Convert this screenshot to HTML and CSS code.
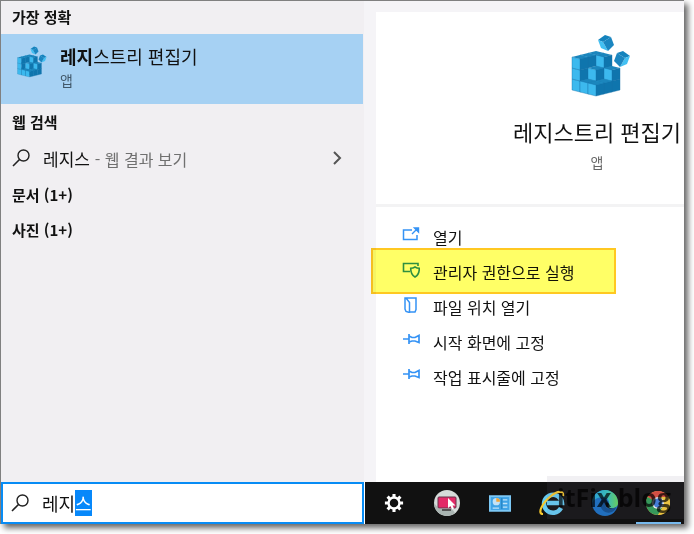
FILE: index.html
```html
<!DOCTYPE html>
<html lang="ko">
<head>
    <meta charset="UTF-8">
    <meta name="viewport" content="width=device-width, initial-scale=1.0">
    <title>레지스트리 편집기 - 검색</title>
    <link rel="stylesheet" href="styles.css">
</head>
<body>
    <!-- shared icons -->
    <svg class="defs" width="0" height="0" aria-hidden="true">
        <defs>
            <g id="cube">
                <path d="M8 0L16 2L8 4L0 2Z" fill="#1b86bd"/>
                <path d="M0 2L8 4V15L0 13Z" fill="#3cb9ee"/>
                <path d="M8 4L16 2V13L8 15Z" fill="#0f75ad"/>
                <path d="M0 2L8 4L16 2M8 4V15M0 2V13L8 15L16 13V2" fill="none" stroke="#1672a8" stroke-width=".4"/>
            </g>
            <g id="flying">
                <path d="M-8 -3L-1 -8L5 -6L-3 -1Z" fill="#1483bd"/>
                <path d="M-8 -3L-3 -1L2 8L-5 5Z" fill="#43c0f2"/>
                <path d="M-3 -1L5 -6L8 2L2 8Z" fill="#1b86c0"/>
            </g>
            <symbol id="regedit" viewBox="-8 0 68 62">
                <use href="#cube" x="17" y="16"/>
                <use href="#cube" x="9" y="18"/>
                <use href="#cube" x="25" y="29"/>
                <use href="#cube" x="25" y="18"/>
                <use href="#cube" x="1" y="42"/>
                <use href="#cube" x="1" y="31"/>
                <use href="#cube" x="1" y="20"/>
                <use href="#cube" x="17" y="42"/>
                <use href="#cube" x="17" y="31"/>
                <use href="#cube" x="33" y="42"/>
                <use href="#cube" x="33" y="31"/>
                <use href="#cube" x="9" y="44"/>
                <use href="#cube" x="25" y="44"/>
                <use href="#cube" x="17" y="46"/>
                <use href="#flying" x="35" y="8"/>
                <use href="#flying" transform="translate(51 24) scale(-1 1)"/>
            </symbol>
            <symbol id="search" viewBox="0 0 18 18">
                <circle cx="11.500" cy="6.500" r="5.500" fill="none" stroke="#222" stroke-width="1.400"/>
                <path d="M7.500 10.500L1 17" stroke="#222" stroke-width="1.600"/>
            </symbol>
            <symbol id="pin" viewBox="0 0 18 16">
                <path d="M1 7H7M7 2V12M7 4L10 5.500H13L17 3.500V10.500L13 9H10L7 10" fill="none" stroke="#3593f5" stroke-width="1.700"/>
            </symbol>
        </defs>
    </svg>

    <div class="screen">
        <main class="panels">
            <section class="results">
                <h2>가장 정확</h2>
                <a href="#" class="best">
                    <svg class="best-icon"><use href="#regedit"/></svg>
                    <span class="best-text">
                        <span class="best-name"><b>레지</b>스트리 편집기</span>
                        <span class="kind">앱</span>
                    </span>
                </a>
                <h2 class="web-title">웹 검색</h2>
                <a href="#" class="web-row">
                    <svg class="search-icon"><use href="#search"/></svg>
                    <span class="web-query">레지스 <small>- 웹 결과 보기</small></span>
                    <svg class="chevron" viewBox="0 0 10 14"><path d="M2 1L8 7L2 13" fill="none" stroke="#555" stroke-width="2"/></svg>
                </a>
                <h2 class="group">문서 (1+)</h2>
                <h2 class="group">사진 (1+)</h2>
            </section>

            <section class="details">
                <div class="card">
                    <div class="hero">
                        <svg class="hero-icon"><use href="#regedit"/></svg>
                        <h1>레지스트리 편집기</h1>
                        <span class="kind">앱</span>
                    </div>
                    <ul class="actions">
                        <li><button type="button">
                            <svg viewBox="0 0 18 16"><path d="M10 3H1.500V12.500H15V8" fill="none" stroke="#3593f5" stroke-width="1.500"/><path d="M10 7L15 2M12.500 1H16.500V5Z" fill="#3593f5" stroke="#3593f5" stroke-width="1.400"/></svg>
                            열기
                        </button></li>
                        <li class="marked"><button type="button">
                            <svg viewBox="0 0 18 16"><path d="M8 9.500H1.500V1.500H16V4" fill="none" stroke="#2f8fa0" stroke-width="1.600"/><path d="M13 5C14.500 6 16 6.300 17.300 6.300C17.300 11 16 13.500 13 15C10 13.500 8.700 11 8.700 6.300C10 6.300 11.500 6 13 5Z" fill="none" stroke="#2f8fa0" stroke-width="1.600"/></svg>
                            관리자 권한으로 실행
                        </button></li>
                        <li><button type="button">
                            <svg viewBox="0 0 18 16"><path d="M4 1H14V12.500L13 15H8M4 1H3V12L4 14.500L7.500 15.500V5.500L4 1" fill="none" stroke="#3593f5" stroke-width="1.500"/></svg>
                            파일 위치 열기
                        </button></li>
                        <li><button type="button"><svg><use href="#pin"/></svg>시작 화면에 고정</button></li>
                        <li><button type="button"><svg><use href="#pin"/></svg>작업 표시줄에 고정</button></li>
                    </ul>
                </div>
            </section>
        </main>

        <footer class="bottom">
            <label class="search-box" for="query">
                <svg class="search-icon"><use href="#search"/></svg>
                <input type="text" id="query" value="레지스" aria-label="검색" autocomplete="off" spellcheck="false">
            </label>
            <nav class="taskbar">
                <button type="button" aria-label="설정">
                    <svg width="20" height="20" viewBox="-11 -11 22 22">
                        <circle r="6" fill="none" stroke="#fff" stroke-width="2.600"/>
                        <g stroke="#fff" stroke-width="3.400">
                            <path d="M0 -6.500V-10M0 6.500V10M-6.500 0H-10M6.500 0H10"/>
                            <path transform="rotate(45)" d="M0 -6.500V-10M0 6.500V10M-6.500 0H-10M6.500 0H10"/>
                        </g>
                    </svg>
                </button>
                <button type="button" aria-label="화면 녹화">
                    <svg width="26" height="26" viewBox="0 0 26 26">
                        <circle cx="13" cy="13" r="13" fill="#d5dbd9"/>
                        <path d="M0 13A13 13 0 0 0 21 23L18 19H5Z" fill="#aab5b2"/>
                        <rect x="4" y="7" width="18" height="11" rx="1" fill="#e32a68" stroke="#64344a"/>
                        <path d="M8 20H17" stroke="#555" stroke-width="2"/>
                        <path d="M14 8V18L16.500 16L18 19.500L20 18.500L18.500 15.500H21.500Z" fill="#fff"/>
                    </svg>
                </button>
                <button type="button" aria-label="제어판">
                    <svg width="22" height="17" viewBox="0 0 24 18">
                        <rect x="1" y="1" width="22" height="16" fill="#3fa3e6" stroke="#7cc8f5" stroke-width="2"/>
                        <circle cx="8" cy="7" r="4" fill="#c3e2f6"/>
                        <path d="M8 7V3A4 4 0 0 1 12 7Z" fill="#f1a436"/>
                        <path d="M4 14H11M15 5H20M15 9H20M15 13H20" stroke="#bfe3f9" stroke-width="1.500"/>
                        <path d="M14 3V15" stroke="#1b79b8"/>
                    </svg>
                </button>
                <button type="button" aria-label="Internet Explorer">
                    <svg width="26" height="26" viewBox="0 0 26 26">
                        <path d="M22 18A9 9 0 1 1 23 13H8" fill="none" stroke="#65cdf5" stroke-width="4.500"/>
                        <path d="M4 24C-2 24 3 13 12 6C18 1 25 0 24 6" fill="none" stroke="#f7c92d" stroke-width="2.200"/>
                    </svg>
                </button>
                <button type="button" aria-label="Microsoft Edge">
                    <svg width="26" height="26" viewBox="0 0 26 26">
                        <defs>
                            <linearGradient id="wave" x1="0" y1="0" x2="1" y2="0"><stop offset="0" stop-color="#22a4e0"/><stop offset=".6" stop-color="#35c5bd"/><stop offset="1" stop-color="#66d85a"/></linearGradient>
                        </defs>
                        <circle cx="13" cy="13" r="13" fill="#1870c4"/>
                        <path d="M0 13A13 13 0 0 1 26 13C26 17 22 19 18 18C15 17 17 16 17 13C17 6 5 5 0 13Z" fill="url(#wave)"/>
                        <path d="M9 12C7 18 12 25 20 22C24 20 24 17 24 17C18 20 13 19 13 14C13 12 15 11 15 11C13 9 10 9 9 12Z" fill="#0e4e91"/>
                        <path d="M14 12C12 16 15 19 21 19C18 18 15 17 17 14Z" fill="#151515"/>
                    </svg>
                </button>
                <button type="button" class="open" aria-label="Chrome">
                    <svg width="24" height="24" viewBox="0 0 24 24">
                        <circle cx="12" cy="12" r="12" fill="#f7cb39"/>
                        <path d="M12 12L1.600 6A12 12 0 0 1 22.400 6Z" fill="#dd4c3e"/>
                        <path d="M12 12L1.600 6A12 12 0 0 0 12 24L17.200 15Z" fill="#2f9e56"/>
                        <path d="M12 6H22.400A12 12 0 0 1 12 24L17.200 15Z" fill="#f7cb39"/>
                        <circle cx="12" cy="12" r="6" fill="#eef3f5"/>
                        <circle cx="12" cy="12" r="4.500" fill="#3f7fe0"/>
                    </svg>
                </button>
            </nav>
        </footer>
        <span class="watermark">itFix blog</span>
    </div>

    <script>
        // keep the last syllable selected, as while typing
        const query = document.getElementById('query');
        query.focus();
        query.setSelectionRange(2, 3);
    </script>
</body>
</html>
```
FILE: styles.css
```css
*,
*::after {
    box-sizing: border-box;
}

body {
    margin: 0;
    min-height: 100vh;
    padding: 0 10px 10px 0;
    background-color: #fff;
    color: #111;
    font-family: "Noto Sans CJK KR", sans-serif;
    font-size: 15px;
}

.defs {
    position: absolute;
}

svg {
    display: block;
    flex: none;
}

a {
    color: inherit;
    text-decoration: none;
}

button {
    border: none;
    background: none;
    padding: 0;
    font: inherit;
    color: inherit;
    cursor: pointer;
}

.screen {
    position: relative;
    display: flex;
    flex-direction: column;
    height: calc(100vh - 10px);
    border-top: 1px solid #808080;
    border-left: 1px solid #808080;
    box-shadow: 4px 4px 6px rgba(0, 0, 0, 0.6);
}

.panels {
    flex: 1;
    display: flex;
    min-height: 0;
}

/* left side */
.results {
    flex: 0 0 363px;
    background-color: #f1eff2;
}

h2 {
    margin: 0;
    padding-left: 11px;
    font-size: 15px;
    font-weight: 700;
    line-height: 32px;
}

.best {
    display: flex;
    height: 70px;
    margin: 1px 1px 0 0;
    padding: 12px;
    background-color: #a6d1f3;
}

.best-icon {
    width: 34px;
    height: 32px;
    margin-right: 13px;
}

.best-text {
    display: flex;
    flex-direction: column;
}

.best-name {
    font-size: 18px;
    line-height: 20px;
}

.kind {
    font-size: 14px;
    line-height: 28px;
    color: #666;
}

.best .kind {
    color: #41586a;
}

.web-title {
    line-height: 35px;
}

.web-row {
    display: flex;
    align-items: center;
    height: 38px;
    padding: 0 22px 0 11px;
}

.search-icon {
    width: 18px;
    height: 18px;
    margin-right: 13px;
}

.web-query {
    flex: 1;
    font-size: 17px;
}

.web-query small {
    font-size: 16px;
    color: #707070;
}

.chevron {
    width: 10px;
    height: 14px;
}

.group {
    line-height: 35px;
}

/* right side */
.details {
    flex: 1;
    min-width: 0;
    padding: 11px 0 0 12px;
    background-color: #f5f4f7;
    overflow: hidden;
}

.card {
    height: 100%;
    background-color: #fff;
}

.hero {
    display: flex;
    flex-direction: column;
    align-items: center;
    width: 442px;
    height: 195px;
    padding-top: 23px;
    border-bottom: 3px solid #f3f3f4;
}

.hero-icon {
    width: 68px;
    height: 62px;
}

h1 {
    margin: 18px 0 1px;
    font-size: 22px;
    font-weight: 400;
    line-height: 32px;
}

.actions {
    list-style: none;
    margin: 0;
    padding: 12px 0 0 26px;
}

.actions li {
    position: relative;
}

.actions button {
    display: flex;
    align-items: center;
    width: 100%;
    height: 35px;
    font-size: 16px;
}

.actions svg {
    width: 18px;
    height: 16px;
    margin: 0 13px 4px 0;
}

/* highlighter over "run as administrator" */
.marked::after {
    content: "";
    position: absolute;
    top: -6px;
    left: -31px;
    width: 245px;
    height: 46px;
    border: 2px solid #ffc821;
    background-color: #ffff66;
    mix-blend-mode: multiply;
    pointer-events: none;
}

/* bottom bar */
.bottom {
    display: flex;
    height: 42px;
}

.search-box {
    flex: 0 0 363px;
    display: flex;
    align-items: center;
    padding-left: 8px;
    border: 2px solid #078cf5;
    background-color: #fff;
}

.search-box input {
    flex: 1;
    min-width: 0;
    padding: 0;
    border: none;
    outline: none;
    font: 18px "Noto Sans CJK KR", sans-serif;
    color: #111;
}

.search-box input::selection {
    background-color: #0788fa;
    color: #fff;
}

.taskbar {
    flex: 1;
    display: flex;
    margin-left: 1px;
    padding-left: 3px;
    background-color: #111;
}

.taskbar button {
    flex: 1;
    display: flex;
    align-items: center;
    justify-content: center;
}

.taskbar .open {
    position: relative;
}

.taskbar .open::after {
    content: "";
    position: absolute;
    left: 5px;
    right: 3px;
    bottom: 0;
    height: 2px;
    background-color: #76b9ed;
}

.watermark {
    position: absolute;
    right: 0;
    bottom: 5px;
    width: 137px;
    padding-left: 10px;
    background-color: rgba(120, 110, 140, 0.1);
    color: rgba(0, 0, 0, 0.7);
    font-family: "Open Sans", sans-serif;
    font-size: 25px;
    font-weight: 700;
    line-height: 43px;
    white-space: nowrap;
    pointer-events: none;
}
```
